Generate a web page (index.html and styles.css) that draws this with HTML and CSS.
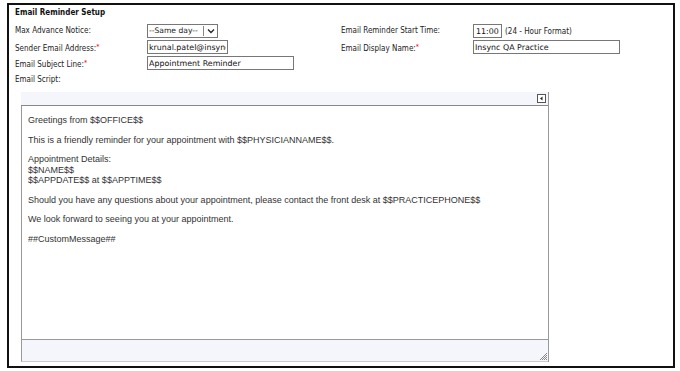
FILE: index.html
```html
<!DOCTYPE html>
<html>
<head>
<meta charset="utf-8">
<link rel="stylesheet" href="styles.css">
</head>
<body>
<div class="box">
  <div class="title">Email Reminder Setup</div>
  <div class="form">
    <div class="label">Max Advance Notice:</div>
    <div class="field">
      <div class="select"><span class="sel-text">--Same day--</span><span class="sel-btn"><svg width="8" height="6" viewBox="0 0 8 6"><path d="M1 1.5 L4 4.5 L7 1.5" fill="none" stroke="#222" stroke-width="1.3"/></svg></span></div>
    </div>
    <div class="label">Email Reminder Start Time:</div>
    <div class="field"><input class="inp time" value="11:00"><span class="hint">(24 - Hour Format)</span></div>

    <div class="label">Sender Email Address:<span class="req">*</span></div>
    <div class="field"><input class="inp email" value="krunal.patel@insync.com"></div>
    <div class="label">Email Display Name:<span class="req">*</span></div>
    <div class="field"><input class="inp name" value="Insync QA Practice"></div>

    <div class="label">Email Subject Line:<span class="req">*</span></div>
    <div class="field"><input class="inp subject" value="Appointment Reminder"></div>
  </div>
  <div class="script-label">Email Script:</div>

  <div class="editor">
    <div class="toolbar">
      <span class="tb-btn"><svg width="7" height="7" viewBox="0 0 7 7"><path d="M4.5 1.5 L2 3.5 L4.5 5.5 Z" fill="#222"/></svg></span>
    </div>
    <div class="content">
      <p>Greetings from $$OFFICE$$</p>
      <p>This is a friendly reminder for your appointment with $$PHYSICIANNAME$$.</p>
      <p>Appointment Details:<br>$$NAME$$<br>$$APPDATE$$ at $$APPTIME$$</p>
      <p>Should you have any questions about your appointment, please contact the front desk at $$PRACTICEPHONE$$</p>
      <p>We look forward to seeing you at your appointment.</p>
      <p>##CustomMessage##</p>
    </div>
    <div class="status">
      <svg class="grip" width="9" height="9" viewBox="0 0 9 9"><path d="M8 1 L1 8 M8 3 L3 8 M8 5 L5 8 M8 7 L7 8" stroke="#888" stroke-width="1"/></svg>
    </div>
  </div>
</div>
</body>
</html>
```
FILE: styles.css
```css
html, body {
  margin: 0;
  padding: 0;
  background: #fff;
}
body {
  padding: 3px 5px 3px 7px;
}
.box {
  width: 658px;
  height: 359px;
  border: 2px solid #111;
  padding: 2px 0 0 6px;
  box-sizing: content-box;
  font-family: "DejaVu Sans Condensed", "DejaVu Sans", Tahoma, sans-serif;
  font-size: 8px;
  color: #222;
  overflow: hidden;
}
.title {
  font-weight: bold;
  line-height: 12px;
  height: 12px;
  margin-bottom: 5px;
  color: #111;
}
.form {
  display: grid;
  grid-template-columns: 132px 194px 132px 1fr;
  grid-template-rows: 14px 14px 14px;
  row-gap: 2px;
}
.label {
  line-height: 14px;
  white-space: nowrap;
}
.script-label {
  line-height: 14px;
  height: 14px;
  margin-top: 3px;
}
.req {
  color: #d00;
  font-size: 7px;
  vertical-align: 2px;
}
.field {
  display: flex;
  align-items: center;
  height: 14px;
}
.inp {
  box-sizing: border-box;
  height: 14px;
  border: 1px solid #777;
  padding: 0 1px;
  margin: 0;
  font-family: "DejaVu Sans", Verdana, sans-serif;
  font-size: 7.9px;
  color: #111;
  background: #fff;
  outline: none;
}
.time {
  width: 29px;
  padding: 0 2px;
}
.hint {
  margin-left: 3px;
}
.email { width: 81px; }
.name { width: 147px; }
.subject { width: 147px; }
.select {
  display: flex;
  box-sizing: border-box;
  width: 71px;
  height: 14px;
  border: 1px solid #777;
  align-items: stretch;
  font-family: "DejaVu Sans", Verdana, sans-serif;
  font-size: 7.6px;
}
.sel-text {
  flex: 1;
  line-height: 12px;
  padding-left: 1px;
  white-space: nowrap;
  overflow: hidden;
}
.sel-btn {
  width: 13px;
  border-left: 1px solid #888;
  display: flex;
  align-items: center;
  justify-content: center;
  margin: 1px 0 1px 0;
}
.editor {
  width: 527px;
  height: 270px;
  margin: 5px 0 0 6px;
  border-right: 1px solid #999;
  display: flex;
  flex-direction: column;
}
.toolbar {
  height: 13px;
  background: #f5f6fb;
  border-bottom: 1px solid #888;
  display: flex;
  justify-content: flex-end;
  align-items: center;
  padding-right: 2px;
}
.tb-btn {
  box-sizing: border-box;
  width: 9px;
  height: 9px;
  border: 1px solid #555;
  background: #fff;
  display: flex;
  align-items: center;
  justify-content: center;
}
.tb-btn svg { width: 7px; height: 7px; }
.content {
  flex: 1;
  border-left: 1px solid #999;
  padding: 9px 6px 0 6px;
  font-family: "Liberation Sans", Arial, sans-serif;
  font-size: 9px;
  line-height: 10.5px;
  color: #333;
}
.content p {
  margin: 0 0 9px 0;
}
.status {
  height: 21px;
  background: #f5f6fb;
  border-top: 1px solid #999;
  border-left: 1px solid #999;
  border-bottom: 1px solid #ccc;
  display: flex;
  justify-content: flex-end;
  align-items: flex-end;
}
.grip { display: block; }
```
